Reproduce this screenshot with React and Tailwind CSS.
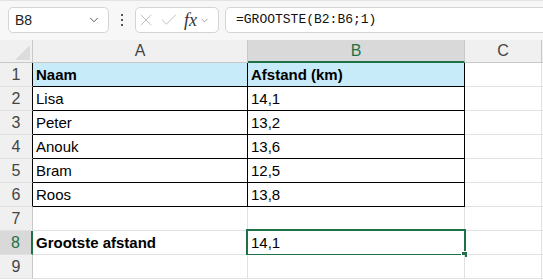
import { X, Check, ChevronDown } from 'lucide-react';

const rows = [
  ['Naam', 'Afstand (km)'],
  ['Lisa', '14,1'],
  ['Peter', '13,2'],
  ['Anouk', '13,6'],
  ['Bram', '12,5'],
  ['Roos', '13,8'],
  ['', ''],
  ['Grootste afstand', '14,1'],
  ['', ''],
];

function RowHead({ n }) {
  const active = n === 8;
  const inTable = n <= 6;
  return (
    <div
      className={
        'flex items-center justify-center text-[16px] border-b border-b-[#e1e1e1] ' +
        (active
          ? 'bg-[#d9d9d9] text-[#1e7145] border-r-2 border-r-[#1e7145]'
          : inTable
          ? 'bg-[#f0f0f0] text-[#444] border-r border-r-black'
          : 'bg-[#f0f0f0] text-[#444] border-r border-r-[#c8c8c8]')
      }
    >
      {n}
    </div>
  );
}

function Cell({ text, bold, table, header, selected }) {
  return (
    <div
      className={
        'relative flex items-center pl-[3px] pt-[2px] border-r border-b ' +
        (table ? 'border-black ' : 'border-[#e1e1e1] ') +
        (header ? 'bg-[#c8ebfa] ' : 'bg-white ') +
        (bold ? 'font-bold' : '')
      }
    >
      {text}
      {selected && (
        <div className="absolute -left-[2px] -top-[2px] -right-[2px] -bottom-[2px] border-2 border-[#1e7145]">
          <div className="absolute -right-[4px] -bottom-[4px] w-[7px] h-[7px] bg-[#1e7145] border border-white" />
        </div>
      )}
    </div>
  );
}

export default function App() {
  return (
    <div className="w-[543px] h-[280px] overflow-hidden bg-white text-[15px] text-black" style={{ fontFamily: '"Liberation Sans", Arial, sans-serif' }}>
      {/* formula bar */}
      <div className="h-[40px] bg-[#f7f7f7] border-t border-[#e3e3e3] flex items-start pt-[6px] pl-[8px] gap-[6px]">
        <div className="w-[101px] h-[26px] bg-white border border-[#d4d4d4] rounded-[5px] flex items-center justify-between pl-[6px] pr-[7px]">
          <span className="text-[14px] text-[#222]">B8</span>
          <ChevronDown size={14} strokeWidth={1.5} className="text-[#444]" />
        </div>
        <div className="w-[14px] h-[26px] flex flex-col items-center justify-center gap-[3px]">
          <div className="w-[2px] h-[2px] bg-[#555]" />
          <div className="w-[2px] h-[2px] bg-[#555]" />
          <div className="w-[2px] h-[2px] bg-[#555]" />
        </div>
        <div className="w-[84px] h-[26px] bg-white border border-[#d4d4d4] rounded-[5px] flex items-center">
          <X size={20} strokeWidth={1} className="text-[#b5b5b5]" />
          <Check size={20} strokeWidth={1} className="text-[#b5b5b5] ml-[3px]" />
          <div className="flex items-center gap-[2px] ml-[5px]">
            <span className="italic text-[18px] leading-none text-[#333]" style={{ fontFamily: '"Liberation Serif", serif' }}>fx</span>
            <ChevronDown size={11} strokeWidth={1.5} className="text-[#777]" />
          </div>
        </div>
        <div className="flex-1 h-[26px] bg-white border border-[#d4d4d4] rounded-l-[5px] -mr-[8px] flex items-center pl-[10px]">
          <span className="text-[13px] text-[#111]" style={{ fontFamily: '"Liberation Mono", monospace' }}>=GROOTSTE(B2:B6;1)</span>
        </div>
      </div>

      {/* grid */}
      <div className="grid grid-cols-[33px_215px_217px_77px_1fr] grid-rows-[23px_repeat(9,24px)]">
        <div className="bg-[#f0f0f0] border-r border-b border-[#c8c8c8] flex items-end justify-end pr-[2px] pb-[2px]">
          <svg width="15" height="15" viewBox="0 0 15 15">
            <polygon points="15,0 15,15 0,15" fill="#dcdcdc" />
          </svg>
        </div>
        <div className="bg-[#f0f0f0] border-r border-b border-[#c8c8c8] text-[16px] text-[#444] flex items-center justify-center">A</div>
        <div className="bg-[#d9d9d9] border-r border-r-[#c8c8c8] border-b-2 border-b-[#1e7145] text-[16px] text-[#1e7145] flex items-center justify-center">B</div>
        <div className="bg-[#f0f0f0] border-r border-b border-[#c8c8c8] text-[16px] text-[#444] flex items-center justify-center">C</div>
        <div className="bg-[#f0f0f0] border-b border-[#c8c8c8]" />

        {rows.map((r, i) => {
          const n = i + 1;
          const table = n <= 6;
          return [
            <RowHead key={'h' + n} n={n} />,
            <Cell key={'a' + n} text={r[0]} bold={n === 1 || n === 8} table={table} header={n === 1} />,
            <Cell key={'b' + n} text={r[1]} bold={n === 1} table={table} header={n === 1} selected={n === 8} />,
            <div key={'c' + n} className="border-r border-b border-[#e1e1e1]" />,
            <div key={'d' + n} className="border-b border-[#e1e1e1]" />,
          ];
        })}
      </div>
    </div>
  );
}
